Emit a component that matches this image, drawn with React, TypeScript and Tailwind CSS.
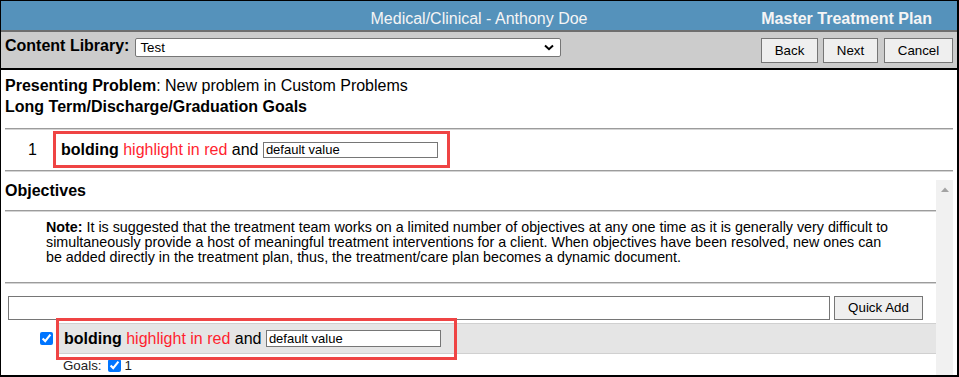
import React from "react";

function Hr({ className = "" }: { className?: string }) {
  return <div className={"h-[2px] border-t border-[#9c9c9c] border-b border-b-[#d4d4d4] " + className} />;
}

function Btn({ label, w }: { label: string; w: string }) {
  return (
    <div
      className={
        "h-[25px] bg-[#efefef] border border-[#767676] flex items-center justify-center text-[13.33px] text-black " + w
      }
    >
      {label}
    </div>
  );
}

export default function App() {
  return (
    <div className="w-[959px] h-[377px] overflow-hidden bg-white border-l border-t border-r-2 border-b-2 border-black font-['Liberation_Sans',Arial,sans-serif] text-black">
      {/* Header */}
      <div className="h-[31px] bg-[#5592bb] border-b-2 border-[#6e6e6e] grid grid-cols-[1fr_auto_1fr] pt-[8px] text-[16px] leading-[20px] text-[#f5f5f5]">
        <div />
        <div>Medical/Clinical - Anthony Doe</div>
        <div className="text-right pr-[25px] font-bold">Master Treatment Plan</div>
      </div>

      {/* Toolbar */}
      <div className="h-[38px] bg-[#cccccc] border-b-2 border-black flex items-start px-[4px]">
        <span className="mt-[4px] font-bold text-[16px] leading-[20px]">Content Library:</span>
        <div className="ml-[6px] mt-[6px] w-[426px] h-[19px] bg-white border border-[#767676] rounded-[2px] flex items-center pl-[4px] pr-[6px] text-[13.33px]">
          <span>Test</span>
          <svg className="ml-auto" width="10" height="7" viewBox="0 0 10 7">
            <path d="M1 1.5 L5 5.2 L9 1.5" stroke="#000" strokeWidth="2" fill="none" />
          </svg>
        </div>
        <div className="ml-auto mt-[6px] flex gap-[5px]">
          <Btn label="Back" w="w-[57px]" />
          <Btn label="Next" w="w-[55px]" />
          <div className="ml-[1px]">
            <Btn label="Cancel" w="w-[69px]" />
          </div>
        </div>
      </div>

      {/* Content */}
      <div className="px-[4px] pt-[5px]">
        <div className="text-[16px] leading-[21px]">
          <span className="font-bold">Presenting Problem</span>: New problem in Custom Problems
        </div>
        <div className="font-bold text-[16px] leading-[21px]">Long Term/Discharge/Graduation Goals</div>
        <Hr className="mt-[11px]" />
        <div className="h-[40px] flex items-start pt-[1px]">
          <div className="w-[48px] pl-[23px] h-[37px] flex items-center text-[16px]">1</div>
          <div className="w-[397px] h-[37px] border-[3px] border-[#ef4444] flex items-center pl-[5px] text-[16px] whitespace-nowrap">
            <span className="font-bold">bolding</span>&nbsp;
            <span className="text-[#ff1f2f]">highlight in red</span>&nbsp;and&nbsp;
            <div className="w-[175px] h-[16px] border border-[#767676] text-[13px] leading-[14px] pl-[2px]">default value</div>
          </div>
        </div>
        <Hr />

        {/* Objectives scroll region */}
        <div className="mt-[8px] flex">
          <div className="flex-1">
            <div className="pt-[1px] font-bold text-[16px] leading-[20px]">Objectives</div>
            <Hr className="mt-[9px]" />
            <div className="mt-[8px] pl-[41px] text-[14.3px] leading-[15px] whitespace-nowrap">
              <span className="font-bold">Note:</span> It is suggested that the treatment team works on a limited number of objectives at any one time as it is generally very difficult to
              <br />
              simultaneously provide a host of meaningful treatment interventions for a client. When objectives have been resolved, new ones can
              <br />
              be added directly in the treatment plan, thus, the treatment/care plan becomes a dynamic document.
            </div>
            <Hr className="mt-[17px]" />
            <div className="mt-[12px] pl-[3px] flex gap-[4px]">
              <div className="w-[822px] h-[24px] border border-[#767676] bg-white" />
              <div className="w-[89px] h-[24px] bg-[#efefef] border border-[#767676] flex items-center justify-center text-[13.33px]">
                Quick Add
              </div>
            </div>
            <div className="mt-[3px] flex">
              <div className="w-[53px] h-[31px] flex items-center">
                <input type="checkbox" defaultChecked className="ml-[35px] w-[13px] h-[13px] accent-[#0075ff]" />
              </div>
              <div className="relative flex-1 h-[31px] bg-[#e5e5e5] border-y border-[#d0d0d0] flex items-center pl-[6px] text-[16px] whitespace-nowrap">
                <span className="font-bold">bolding</span>&nbsp;
                <span className="text-[#ff1f2f]">highlight in red</span>&nbsp;and&nbsp;
                <div className="w-[175px] h-[17px] bg-white border border-[#767676] text-[13px] leading-[15px] pl-[2px]">default value</div>
                <div className="absolute left-[-2px] top-[-6px] w-[401px] h-[42px] border-[3px] border-[#ef4444]" />
              </div>
            </div>
            <div className="mt-[4px] pl-[58px] flex items-center text-[13.33px] leading-[15px] text-[#222]">
              <span>Goals:</span>
              <input type="checkbox" defaultChecked className="ml-[6px] w-[13px] h-[13px] accent-[#0075ff]" />
              <span className="ml-[4px]">1</span>
            </div>
          </div>
          <div className="w-[17px] h-[220px] bg-[#f1f1f1] flex justify-center pt-[7px]">
            <svg width="8" height="5" viewBox="0 0 8 5">
              <path d="M0 5 L4 0.5 L8 5 Z" fill="#a3a3a3" />
            </svg>
          </div>
        </div>
      </div>
    </div>
  );
}
